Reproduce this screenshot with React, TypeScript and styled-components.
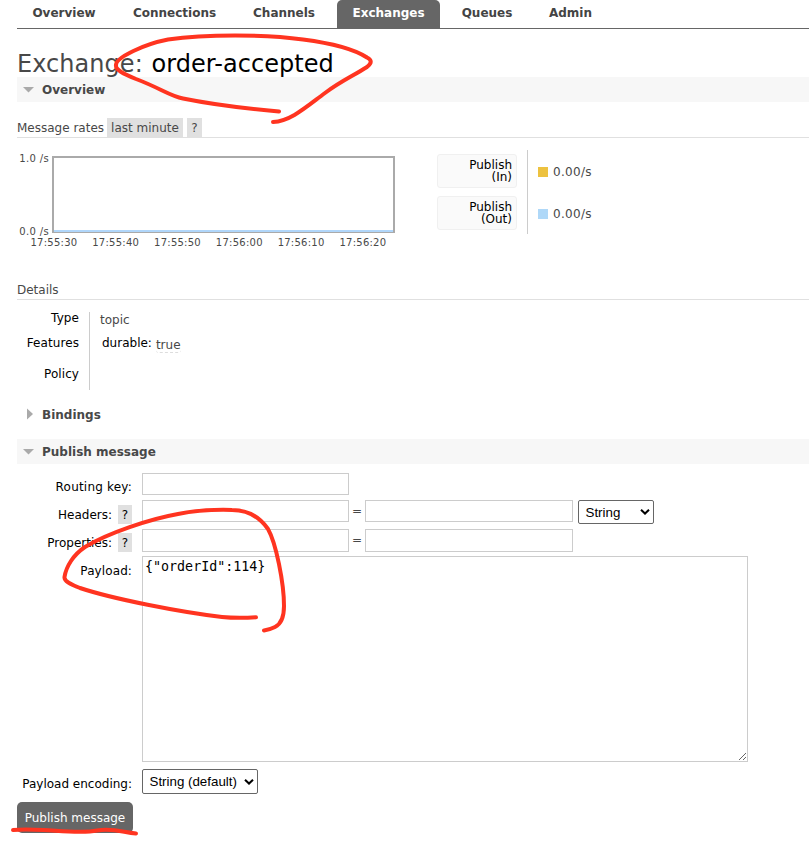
import React from 'react';
import styled, { createGlobalStyle } from 'styled-components';

const GlobalStyle = createGlobalStyle`
  * { box-sizing: border-box; }
  html, body { margin: 0; background: #fff; overflow: hidden; }
  body { font: 12px Verdana, "DejaVu Sans", sans-serif; color: #484848; }
`;

const Page = styled.main`
  position: relative;
  width: 809px;
  height: 841px;
  padding-left: 17px;
  overflow: hidden;
`;

const Tabs = styled.nav`
  display: flex;
  gap: 7px;
  height: 29px;
  border-bottom: 1px solid #666;
`;

const Tab = styled.a<{ $width: number; $active?: boolean }>`
  width: ${p => p.$width}px;
  height: 28px;
  line-height: 26px;
  text-align: center;
  white-space: nowrap;
  font-weight: bold;
  border-radius: 5px 5px 0 0;
  color: ${p => (p.$active ? '#fff' : '#444')};
  background: ${p => (p.$active ? '#666' : 'transparent')};
`;

const Title = styled.h1`
  margin: 0;
  padding-top: 16px;
  height: 48px;
  font-size: 24px;
  font-weight: normal;
  line-height: 39px;
  white-space: pre;
  letter-spacing: 0.05px;
  b { font-weight: normal; color: #000; margin-left: 1px; }
`;

const SectionHeader = styled.h2<{ $open?: boolean; $gap?: number }>`
  display: flex;
  align-items: flex-start;
  margin: 0 0 ${p => p.$gap ?? 0}px;
  height: 25px;
  padding-left: 6px;
  font-size: 12px;
  line-height: 26px;
  background: ${p => (p.$open ? '#f7f7f7' : 'transparent')};
  svg { width: 12px; height: 12px; margin: 6px 7px 0 0; }
`;

const SubHeader = styled.h3<{ $top: number }>`
  display: flex;
  align-items: flex-end;
  gap: 4px;
  margin: ${p => p.$top}px 0 0;
  height: 20px;
  border-bottom: 1px solid #e0e0e0;
  font-size: 12px;
  font-weight: normal;
  line-height: 19px;
`;

const SubTitle = styled.span<{ $width?: number }>`
  width: ${p => (p.$width ? `${p.$width}px` : 'auto')};
  height: 18px;
  white-space: nowrap;
`;

const Badge = styled.span<{ $width: number }>`
  width: ${p => p.$width}px;
  height: 19px;
  line-height: 20px;
  text-align: center;
  white-space: nowrap;
  background: #e0e0e0;
`;

const Rates = styled.section`
  display: flex;
  height: 142px;
`;

const Chart = styled.div`
  width: 420px;
  padding-top: 12px;
  font-size: 10px;
  letter-spacing: 0.25px;
`;

const PlotRow = styled.div`
  display: flex;
  height: 84px;
`;

const YAxis = styled.div`
  display: flex;
  flex-direction: column;
  justify-content: space-between;
  width: 35px;
  height: 88px;
  padding: 3px 3px 0 0;
  line-height: 12px;
  text-align: right;
  white-space: nowrap;
  letter-spacing: 0.35px;
`;

const Plot = styled.div`
  width: 343px;
  height: 77px;
  margin-top: 6px;
  padding-top: 72px;
  border: 2px solid #aaa;
  border-bottom-width: 1px;
`;

const Series = styled.div`
  height: 2px;
  background: #b0d6fa;
`;

const XAxis = styled.div`
  display: flex;
  margin-left: 6px;
  line-height: 12px;
  padding-top: 3px;
  span { width: 61.8px; text-align: center; }
`;

const RateNames = styled.div`
  display: flex;
  flex-direction: column;
  gap: 8px;
  width: 91px;
  height: 84px;
  margin-top: 12px;
  padding-top: 4px;
  border-right: 1px solid #ccc;
`;

const RateName = styled.div`
  width: 80px;
  height: 34px;
  padding: 4px 4px 0 0;
  border: 1px solid #f0f0f0;
  border-radius: 3px;
  background: #fafafa;
  color: #000;
  line-height: 12px;
  text-align: right;
`;

const RateValues = styled.div`
  display: flex;
  flex-direction: column;
  padding: 12px 0 0 10px;
`;

const RateValue = styled.div<{ $color: string }>`
  display: flex;
  align-items: center;
  gap: 5px;
  height: 42px;
  padding-top: 2px;
  letter-spacing: 0.3px;
  &::before {
    content: '';
    width: 10px;
    height: 10px;
    background: ${p => p.$color};
  }
`;

const Details = styled.dl`
  display: grid;
  grid-template-columns: 73px 1fr;
  grid-template-rows: 25px 27px 26px;
  height: 78px;
  margin: 12px 0 12px;
`;

const DetailName = styled.dt<{ $top?: number }>`
  padding: ${p => p.$top ?? 0}px 10px 0 0;
  line-height: 12px;
  color: #000;
  text-align: right;
  border-right: 1px solid #ccc;
  letter-spacing: 0.08px;
`;

const DetailValue = styled.dd<{ $indent?: number; $top?: number }>`
  display: flex;
  align-items: flex-start;
  margin: 0;
  padding: ${p => p.$top ?? 2}px 0 0 ${p => p.$indent ?? 10}px;
  line-height: 12px;
  i {
    font-style: normal;
    color: #000;
    margin-right: 4px;
  }
  abbr {
    height: 14px;
    margin-top: 2px;
    border-bottom: 1px dashed #ddd;
    border-radius: 3px;
  }
`;

const Form = styled.form`
  display: grid;
  grid-template-columns: 125px 1fr;
  grid-template-rows: 27px 29px 27px 213px 33px;
  margin-top: 9px;
  align-items: start;
`;

const Label = styled.label<{ $line?: number; $spacing?: number }>`
  display: flex;
  justify-content: flex-end;
  align-items: center;
  gap: 6px;
  height: ${p => p.$line ?? 29}px;
  padding-right: 10px;
  color: #000;
  white-space: nowrap;
  letter-spacing: ${p => p.$spacing ?? 0}px;
`;

const Fields = styled.div`
  display: flex;
  align-items: flex-start;
`;

const Field = styled.input<{ $width: number; $height?: number }>`
  width: ${p => p.$width}px;
  height: ${p => p.$height ?? 22}px;
  padding: 2px;
  border: 1px solid #ccc;
  border-radius: 0;
  outline: none;
`;

const Equals = styled.span`
  width: 16px;
  line-height: 22px;
  text-align: center;
`;

const Payload = styled.textarea`
  width: 606px;
  height: 206px;
  padding: 2px;
  border: 1px solid #ccc;
  outline: none;
  resize: both;
  overflow: auto;
  color: #000;
  font: 13.33px/16px "DejaVu Sans Mono", monospace;
`;

const Select = styled.button<{ $width: number; $height: number; $left?: number }>`
  display: flex;
  align-items: center;
  justify-content: space-between;
  width: ${p => p.$width}px;
  height: ${p => p.$height}px;
  margin-left: ${p => p.$left ?? 0}px;
  padding: 0 3px 0 6.500px;
  border: 1px solid #666;
  border-radius: 2px;
  background: #fff;
  color: #000;
  font: 13.33px "Liberation Sans", Arial, sans-serif;
  white-space: nowrap;
`;

const Submit = styled.button`
  width: 116px;
  height: 31px;
  padding: 0;
  border: 0;
  border-radius: 5px;
  background: #666;
  color: #fff;
  font: 12px Verdana, "DejaVu Sans", sans-serif;
  white-space: nowrap;
`;

const Annotations = styled.svg`
  position: absolute;
  inset: 0;
  pointer-events: none;
  fill: none;
  stroke: #ff3420;
  stroke-width: 4;
  stroke-linecap: round;
  stroke-linejoin: round;
`;

const Arrow = ({ open }: { open?: boolean }) => (
  <svg viewBox="0 0 12 12" fill="#aaa">
    <path d={open ? 'M0 4H11L5.5 9.500Z' : 'M4 .5V11.5L10 6Z'} />
  </svg>
);

const Chevron = () => (
  <svg width="10" height="8" viewBox="0 0 10 8" fill="none" stroke="#000" strokeWidth="2">
    <path d="M1 1.7L5 5.5L9 1.7" />
  </svg>
);

const times = ['17:55:30', '17:55:40', '17:55:50', '17:56:00', '17:56:10', '17:56:20'];

export default function App() {
  return (
    <>
      <GlobalStyle />
      <Page>
        <Tabs>
          <Tab $width={94}>Overview</Tab>
          <Tab $width={113}>Connections</Tab>
          <Tab $width={92}>Channels</Tab>
          <Tab $width={103} $active>Exchanges</Tab>
          <Tab $width={80}>Queues</Tab>
          <Tab $width={73}>Admin</Tab>
        </Tabs>
        <Title>Exchange: <b>order-accepted</b></Title>
        <SectionHeader $open><Arrow open />Overview</SectionHeader>
        <SubHeader $top={16}>
          <SubTitle $width={86}>Message rates</SubTitle>
          <Badge $width={76}>last minute</Badge>
          <Badge $width={15}>?</Badge>
        </SubHeader>
        <Rates>
          <Chart>
            <PlotRow>
              <YAxis><span>1.0 /s</span><span>0.0 /s</span></YAxis>
              <Plot><Series /></Plot>
            </PlotRow>
            <XAxis>{times.map(t => <span key={t}>{t}</span>)}</XAxis>
          </Chart>
          <RateNames>
            <RateName>Publish<br />(In)</RateName>
            <RateName>Publish<br />(Out)</RateName>
          </RateNames>
          <RateValues>
            <RateValue $color="#edc240">0.00/s</RateValue>
            <RateValue $color="#afd8f8">0.00/s</RateValue>
          </RateValues>
        </Rates>
        <SubHeader $top={0}><SubTitle>Details</SubTitle></SubHeader>
        <Details>
          <DetailName>Type</DetailName>
          <DetailValue>topic</DetailValue>
          <DetailName>Features</DetailName>
          <DetailValue $indent={12} $top={0}><i>durable:</i><abbr>true</abbr></DetailValue>
          <DetailName $top={4}>Policy</DetailName>
          <DetailValue />
        </Details>
        <SectionHeader $gap={12}><Arrow />Bindings</SectionHeader>
        <SectionHeader $open><Arrow open />Publish message</SectionHeader>
        <Form onSubmit={e => e.preventDefault()}>
          <Label $line={28} $spacing={0.2}>Routing key:</Label>
          <Fields><Field $width={207} /></Fields>
          <Label>Headers: <Badge $width={14}>?</Badge></Label>
          <Fields>
            <Field $width={207} /><Equals>=</Equals><Field $width={208} />
            <Select type="button" $width={76} $height={24} $left={5}>String<Chevron /></Select>
          </Fields>
          <Label $line={27}>Properties: <Badge $width={14}>?</Badge></Label>
          <Fields>
            <Field $width={207} $height={23} /><Equals>=</Equals><Field $width={208} $height={23} />
          </Fields>
          <Label $spacing={0.1}>Payload:</Label>
          <Payload defaultValue={'{"orderId":114}'} spellCheck={false} />
          <Label>Payload encoding:</Label>
          <Select type="button" $width={116} $height={25}>String (default)<Chevron /></Select>
          <Submit type="submit">Publish message</Submit>
        </Form>
        <Annotations width="809" height="841" viewBox="0 0 809 841">
          <path d="M279 111.5C240 108 205 103 183 98.500C170 96 160 88 136 79C124 74 115 70 116 65C116 57 145 44 168 39.500C205 34 265 34 303 39.500C330 43 354 49 367 57.500C372 60 372 63 367 67C353 76 341 81 325 93C306 107 291 121 273 122" />
          <path d="M256 617.300C245 618 232 618 222 617C180 612 113 599 80 588C70 584 64 581 64.500 577C66 567 73 555 85 547C108 533 150 519 178 514C198 510 215 509.500 232 510C250 510 261 519 268 529C276 543 284 583 284 606C284 618 281 624 275 627C271 629 268 630 264 630.500" />
          <path d="M13 830C28 828.500 40 830 52 830.500C67 831.500 85 833 97 830.500C113 828 122 832 136 833.500" />
        </Annotations>
      </Page>
    </>
  );
}
